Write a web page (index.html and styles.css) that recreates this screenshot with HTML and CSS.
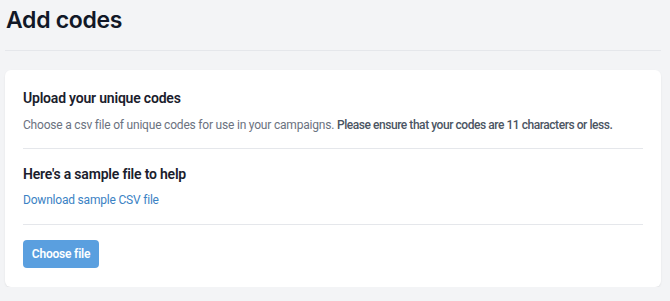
FILE: index.html
```html
<!DOCTYPE html>
<html lang="en">
<head>
<meta charset="utf-8">
<title>Add codes</title>
<link rel="stylesheet" href="styles.css">
</head>
<body>
<div class="page">
  <header class="page-header">
    <h1 class="page-title">Add codes</h1>
  </header>
  <div class="card">
    <section class="section">
      <h2 class="section-title">Upload your unique codes</h2>
      <p class="section-text">Choose a csv file of unique codes for use in your campaigns. <strong class="emph">Please ensure that your codes are 11 characters or less.</strong></p>
    </section>
    <section class="section">
      <h2 class="section-title">Here's a sample file to help</h2>
      <p class="section-text"><a class="link" href="#">Download sample CSV file</a></p>
    </section>
    <section class="section section-last">
      <button class="btn" type="button">Choose file</button>
    </section>
  </div>
</div>
</body>
</html>
```

FILE: styles.css
```css
* { box-sizing: border-box; }
html, body { margin: 0; padding: 0; }
body {
  background: #f3f4f6;
  font-family: Roboto, "Noto Sans", sans-serif;
  color: #111827;
}
.page {
  padding: 0 9px 0 5px;
}
.page-header {
  height: 51px;
  border-bottom: 1px solid #e5e7eb;
  padding: 6px 0 0 1px;
}
.page-title {
  margin: 0;
  font-family: Inter, Roboto, sans-serif;
  font-size: 23px;
  line-height: 29px;
  font-weight: 600;
  letter-spacing: -0.3px;
  color: #111827;
}
.card {
  margin-top: 19px;
  background: #fff;
  border-radius: 6px;
  box-shadow: 0 1px 2px rgba(0,0,0,0.08);
  padding: 18px 18px 19px;
}
.section {
  border-bottom: 1px solid #e5e7eb;
  padding: 15px 0 13px;
}
.section:first-child { padding-top: 0; }
.section:nth-child(2) { padding-bottom: 14px; }
.section-last { border-bottom: 0; padding-bottom: 0; }
.section-title {
  margin: 0;
  font-size: 14px;
  line-height: 20px;
  font-weight: 600;
  letter-spacing: -0.2px;
  color: #1a202c;
}
.section-text {
  margin: 7px 0 0;
  font-size: 12px;
  line-height: 20px;
  letter-spacing: -0.2px;
  color: #6b7280;
  white-space: nowrap;
}
.section:nth-child(2) .section-text { margin-top: 6px; }
.emph {
  font-weight: 500;
  letter-spacing: -0.45px;
  color: #4b5563;
}
.link {
  color: #3b82c4;
  text-decoration: none;
}
.btn {
  display: block;
  height: 28px;
  width: 76px;
  padding: 0;
  border: 0;
  border-radius: 4px;
  background: #5a9fdf;
  color: #fff;
  font-family: inherit;
  font-size: 12px;
  font-weight: 600;
  letter-spacing: -0.2px;
}
```
